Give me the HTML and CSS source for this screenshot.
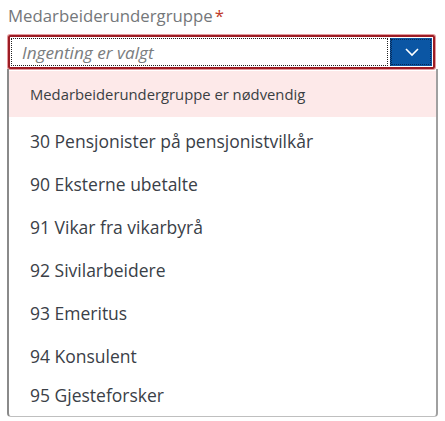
FILE: index.html
```html
<!DOCTYPE html>
<html lang="no">
  <head>
    <meta charset="UTF-8" />
    <meta name="viewport" content="width=device-width, initial-scale=1.0" />
    <title>Medarbeiderundergruppe</title>
    <link rel="stylesheet" href="styles.css">
  </head>

  <body>
    <label class="field-label" for="subgroup">Medarbeiderundergruppe<span class="required">*</span></label>

    <div class="combo">
      <div class="combo-input">
        <input id="subgroup" type="text" placeholder="Ingenting er valgt" />
      </div>
      <button class="combo-arrow" aria-label="Åpne">
        <svg width="16" height="10" viewBox="0 0 16 10">
          <path d="M2 2 L8 8 L14 2" fill="none" stroke="#fff" stroke-width="1.6" />
        </svg>
      </button>
    </div>

    <div class="popover">
      <div class="value-state">Medarbeiderundergruppe er nødvendig</div>
      <ul class="options">
        <li>30 Pensjonister på pensjonistvilkår</li>
        <li>90 Eksterne ubetalte</li>
        <li>91 Vikar fra vikarbyrå</li>
        <li>92 Sivilarbeidere</li>
        <li>93 Emeritus</li>
        <li>94 Konsulent</li>
        <li class="last">95 Gjesteforsker</li>
      </ul>
    </div>
  </body>
</html>
```

FILE: styles.css
```css
body {
  font-family: "Open Sans", Arial, sans-serif;
  margin: 0;
  padding: 6px 8px 0 8px;
  background: #fff;
  color: #32363a;
}

.field-label {
  display: block;
  font-size: 16.8px;
  color: #74777a;
  line-height: 20px;
  margin-bottom: 9px;
}

.required {
  color: #c0392b;
  margin-left: 2px;
}

.combo {
  display: flex;
  height: 34px;
  width: 427px;
  box-sizing: border-box;
  border: 2px solid #9c1c24;
  box-shadow: 0 0 0 1px #e59a9e;
  border-radius: 2px;
}

.combo-input {
  flex: 1;
  display: flex;
  padding: 1px;
}

.combo-input input {
  flex: 1;
  border: 1px dotted #222;
  outline: none;
  margin: 0;
  padding: 0 10px;
  font-family: "Open Sans", Arial, sans-serif;
  font-size: 17.2px;
  font-style: italic;
  color: #32363a;
}

.combo-input input::placeholder {
  color: #7a7d80;
}

.combo-arrow {
  width: 42px;
  border: none;
  border-left: 1px dotted #0a2a55;
  background: #0b56a4;
  display: flex;
  align-items: center;
  justify-content: center;
  padding: 0;
  margin: 1px;
  outline: 1px dotted #0a2a55;
  outline-offset: -2px;
}

.popover {
  margin-left: -1px;
  width: 431px;
  box-sizing: border-box;
  border: 1px solid #bfbfbf;
  border-left: 2px solid #8a8a8a;
  border-right: 2px solid #a0a0a0;
  border-top: none;
  border-radius: 0 0 4px 4px;
  padding-top: 2px;
}

.value-state {
  background: #fde9e9;
  font-size: 14.8px;
  color: #3a3e42;
  height: 46px;
  line-height: 46px;
  padding-left: 21px;
}

.options {
  list-style: none;
  margin: 0;
  padding: 3px 0 0 0;
}

.options li {
  font-size: 17.5px;
  height: 43px;
  line-height: 43px;
  padding-left: 21px;
  color: #3a4047;
}

.options li.last {
  height: 38px;
  line-height: 34px;
}
```
